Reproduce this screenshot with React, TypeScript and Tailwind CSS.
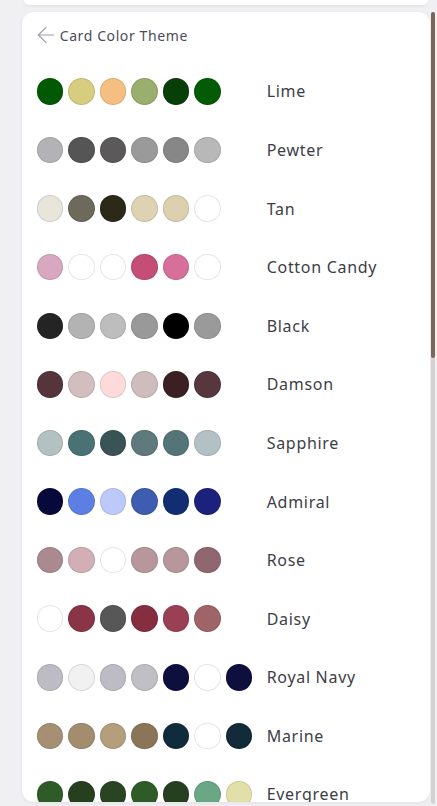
import { ArrowLeft } from "lucide-react";

type Theme = { name: string; colors: string[] };

const themes: Theme[] = [
  { name: "Lime", colors: ["#015a03", "#d8cc7f", "#f4bf80", "#9aae6d", "#083f08", "#035c05"] },
  { name: "Pewter", colors: ["#b3b3b5", "#555556", "#5b5959", "#9a9a9a", "#878787", "#b8b8b9"] },
  { name: "Tan", colors: ["#e8e5db", "#6d6a5c", "#2d2919", "#ddd2b2", "#dcd0af", "#ffffff"] },
  { name: "Cotton Candy", colors: ["#d8a7c0", "#ffffff", "#ffffff", "#c44e75", "#d86f9a", "#ffffff"] },
  { name: "Black", colors: ["#242424", "#b3b3b3", "#bdbdbd", "#999999", "#000000", "#9a9a9a"] },
  { name: "Damson", colors: ["#55343c", "#d2bebe", "#ffdada", "#cfbcbc", "#3c1f23", "#57363e"] },
  { name: "Sapphire", colors: ["#b3c1c3", "#4a7174", "#3a5455", "#5f797c", "#537578", "#b3c1c5"] },
  { name: "Admiral", colors: ["#07093a", "#5d7fe4", "#bdcaf9", "#3e5db0", "#122d71", "#1c217b"] },
  { name: "Rose", colors: ["#aa8a90", "#d2aeb6", "#ffffff", "#b7979c", "#b8979c", "#906670"] },
  { name: "Daisy", colors: ["#ffffff", "#8a3447", "#585758", "#852e40", "#9a4055", "#9e6467"] },
  { name: "Royal Navy", colors: ["#bdbcc4", "#f1f1f1", "#bdbcc4", "#c0bfc5", "#0e0f3d", "#ffffff", "#0e0f3d"] },
  { name: "Marine", colors: ["#a68f73", "#a48c6e", "#b59e7c", "#8b7558", "#0f2b3c", "#ffffff", "#112b3a"] },
  { name: "Evergreen", colors: ["#2f5b29", "#26401f", "#284423", "#2f5b29", "#263f20", "#6aa784", "#e2dfa8"] },
];

const ThemeRow = ({ theme }: { theme: Theme }) => {
  return (
    <div className="flex items-center h-[58.58px] shrink-0">
      <div className="flex gap-[5px] w-[230px] shrink-0">
        {theme.colors.map((c, i) => (
          <span
            key={i}
            className="block w-[26.5px] h-[26.5px] rounded-full border border-black/10"
            style={{ backgroundColor: c }}
          />
        ))}
      </div>
      <p className="text-[16px] tracking-[0.7px] text-[#3d3d46] whitespace-nowrap">{theme.name}</p>
    </div>
  );
};

export default function App() {
  return (
    <div
      className="w-[437px] h-[806px] overflow-hidden bg-[#f0f0f2] flex flex-col"
      style={{ fontFamily: '"Noto Sans", "Open Sans", sans-serif' }}
    >
      <div className="ml-[24px] mr-[9px] h-[5px] bg-white rounded-b-[12px] shadow-[0_1px_3px_rgba(0,0,0,0.08)]" />
      <div className="flex flex-1 min-h-0 mt-[7px] pl-[22px] pr-[2px] pb-[2px]">
        <div className="flex-1 mb-[2px] bg-white rounded-[12px] shadow-[0_1px_4px_rgba(0,0,0,0.06)] pl-[14.7px] pt-[13px] flex flex-col overflow-hidden">
          <div className="flex items-center h-[20px]">
            <ArrowLeft size={26} strokeWidth={1.1} className="text-[#9c9ca8] -ml-[3.5px] shrink-0" />
            <span className="text-[14px] tracking-[0.6px] text-[#4b4b5c] ml-[0.5px]">Card Color Theme</span>
          </div>
          <div className="flex flex-col mt-[17.2px]">
            {themes.map((t) => (
              <ThemeRow key={t.name} theme={t} />
            ))}
          </div>
        </div>
        <div className="w-[4.5px] ml-[1px] bg-[#d9d1cf] rounded-full flex flex-col">
          <div className="h-[346px] bg-[#7d6658] rounded-full" />
        </div>
      </div>
    </div>
  );
}
